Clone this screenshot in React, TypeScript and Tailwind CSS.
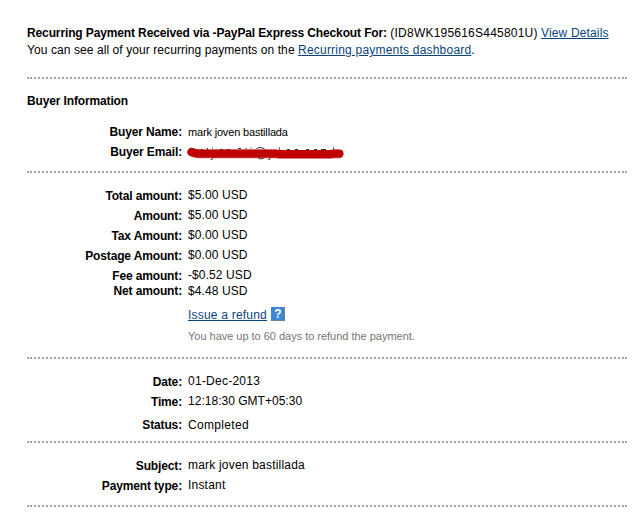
import type { ReactNode } from 'react';

function Divider() {
  return <div className="w-[600px] border-t-2 border-dotted border-[#a3a3a3]" />;
}

type RowProps = {
  label: string;
  labelClass?: string;
  valueClass?: string;
  className?: string;
  children: ReactNode;
};

function Row({ label, labelClass = 'pt-px', valueClass = 'tracking-[0.1px]', className = 'h-5', children }: RowProps) {
  return (
    <div className={`flex gap-1.5 ${className}`}>
      <div className={`w-[155px] shrink-0 text-right font-bold tracking-[-0.14px] ${labelClass}`}>{label}</div>
      <div className={valueClass}>{children}</div>
    </div>
  );
}

function Redacted() {
  return (
    <svg width="159" height="14" viewBox="0 0 159 14" className="-ml-0.5 mt-0.5 block">
      {/* ink that shows past the marker */}
      <path
        d="M15 3.5h2M21.5 2v2M26.5 1.5v1M26.5 12v1l-2 1M34 3.5h3M41 3.5h3M52 2.5h3M60 2v1.5M65 2.5v-1M70 3.5q1-2 4-2t5 2M72 12q3 2 6 0M84 11v2l-2 1M93.5 1.5v2M101 3.5h3M109 3.5h3M120 3.5h3M128 3.5h3M135 3.5h5M147.5 1.5v2"
        stroke="#333"
        strokeWidth="1"
        fill="none"
      />
      <path d="M5.500 6 Q9 8 15 8 H90 L94 8.500 H144 L148 8 H153" stroke="#d95050" strokeWidth="8.500" strokeLinecap="round" strokeLinejoin="round" fill="none" />
      <path d="M5.500 6 Q9 7.500 15 7.500 H90 L94 8 H144 L148 7.500 H153.500" stroke="#c00000" strokeWidth="8" strokeLinecap="round" strokeLinejoin="round" fill="none" />
    </svg>
  );
}

export default function App() {
  return (
    <div className="h-[527px] w-[636px] overflow-hidden whitespace-nowrap bg-white pl-[27px] pt-[25px] font-['Liberation_Sans',Arial,sans-serif] text-[12px] leading-4 text-black">
      <div className="h-[52px] leading-[17px]">
        <div>
          <b className="tracking-[-0.125px]">Recurring Payment Received via -PayPal Express Checkout For:</b>{' '}
          <span className="tracking-[0.22px]">(ID8WK195616S445801U)</span>{' '}
          <a className="tracking-[0.15px] text-[#084482] underline">View Details</a>
        </div>
        <div>
          <span className="tracking-[0.08px]">You can see all of your recurring payments on the </span>
          <a className="tracking-[0.21px] text-[#084482] underline">Recurring payments dashboard</a>.
        </div>
      </div>
      <Divider />

      <div className="h-[92px] pt-[14px]">
        <h2 className="mb-[15px] font-bold tracking-[-0.14px]">Buyer Information</h2>
        <Row label="Buyer Name:" labelClass="" valueClass="text-[11px] tracking-[-0.17px]">
          mark joven bastillada
        </Row>
        <Row label="Buyer Email:" labelClass="">
          <Redacted />
        </Row>
      </div>
      <Divider />

      <div className="h-[184px] pt-[14px]">
        <Row label="Total amount:">$5.00 USD</Row>
        <Row label="Amount:">$5.00 USD</Row>
        <Row label="Tax Amount:">$0.00 USD</Row>
        <Row label="Postage Amount:">$0.00 USD</Row>
        <Row label="Fee amount:" className="h-4">-$0.52 USD</Row>
        <Row label="Net amount:" labelClass="">$4.48 USD</Row>
        <div className="ml-[161px] mt-1 flex h-[21px] items-start">
          <a className="tracking-[0.21px] text-[#084482] underline">Issue a refund</a>
          <span className="ml-1 flex size-[14px] items-center justify-center bg-[#3f86cf] text-[12px] font-bold leading-none text-white shadow-[inset_-1px_-1px_0_#6b7f93]">?</span>
        </div>
        <div className="ml-[161px] text-[11px] tracking-[-0.02px] text-[#757575]">You have up to 60 days to refund the payment.</div>
      </div>
      <Divider />

      <div className="h-[82px] pt-[14px]">
        <Row label="Date:" valueClass="tracking-[0.25px]">01-Dec-2013</Row>
        <Row label="Time:" className="h-6" valueClass="tracking-[0.02px]">12:18:30 GMT+05:30</Row>
        <Row label="Status:" labelClass="" valueClass="tracking-[0.32px]">Completed</Row>
      </div>
      <Divider />

      <div className="h-[62px] pt-[14px]">
        <Row label="Subject:" valueClass="tracking-[0.2px]">mark joven bastillada</Row>
        <Row label="Payment type:" valueClass="tracking-[0.2px]">Instant</Row>
      </div>
      <Divider />
    </div>
  );
}
